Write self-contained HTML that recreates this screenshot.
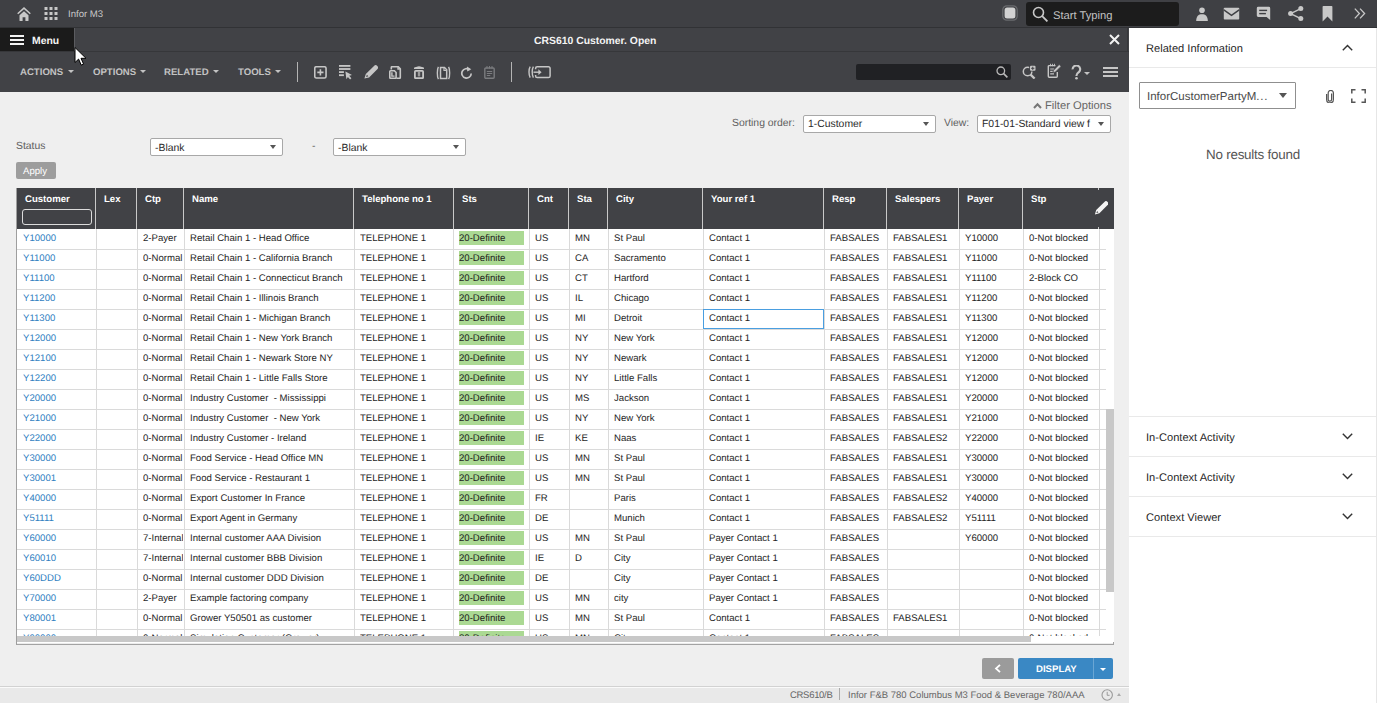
<!DOCTYPE html><html><head><meta charset="utf-8"><title>CRS610</title><style>
*{box-sizing:border-box}
html,body{margin:0;padding:0}
body{width:1377px;height:703px;overflow:hidden;position:relative;background:#efefef;font-family:"Liberation Sans",sans-serif;text-rendering:geometricPrecision}
.a{position:absolute}
svg{position:absolute;display:block}
#topbar{position:absolute;left:0;top:0;width:1377px;height:28px;background:#3f4044;border-bottom:1px solid #313235}
#menubar{position:absolute;left:0;top:28px;width:1129px;height:24px;background:#414246;border-bottom:1px solid #36373a}
#menubtn{position:absolute;left:0;top:0;width:75px;height:23px;background:#1b1b1b;border-right:1px solid #5b5c60}
#toolbar{position:absolute;left:0;top:52px;width:1129px;height:40px;background:#414246}
.tm{position:absolute;top:66px;font-size:9.6px;font-weight:bold;color:#c3c3c3;line-height:14px;white-space:nowrap}
.caret{position:absolute;width:0;height:0;border-left:3px solid transparent;border-right:3px solid transparent;border-top:3px solid #c3c3c3}
.sep{position:absolute;width:1px;background:#b4b4b4}
#panel{position:absolute;left:1129px;top:28px;width:247px;height:675px;background:#fff}
.pl{position:absolute;left:0;width:247px;height:1px;background:#e9e9e9}
.ptxt{position:absolute;left:17px;font-size:11.1px;color:#1f1f1f;white-space:nowrap;line-height:14px}
.dd{position:absolute;background:#fff;border:1px solid #a8a8a8;border-radius:2px}
.ddt{position:absolute;font-size:10.4px;color:#2a2a2a;white-space:nowrap;line-height:14px}
.ddc{position:absolute;width:0;height:0;border-left:3.5px solid transparent;border-right:3.5px solid transparent;border-top:4px solid #555}
.lbl{position:absolute;font-size:10.4px;color:#5e5e5e;white-space:nowrap;line-height:14px}
#tbl{position:absolute;left:16px;top:188px;width:1098px;height:457px;background:#fff;border-left:1px solid #9e9e9e;border-bottom:1px solid #a3a3a3}
.thead{position:absolute;left:0;top:0;width:1097px;height:41px;background:#414246}
.th{position:absolute;top:5px;font-size:9.6px;font-weight:bold;color:#fff;line-height:14px;white-space:nowrap}
.hd{position:absolute;top:0;width:1px;height:41px;background:#c9c9c9}
.hfilter{position:absolute;left:5px;top:21px;width:70px;height:16px;border:1.3px solid #dcdcdc;border-radius:3px}
.hpen{left:1077px;top:13px}
.tbody{position:absolute;left:0;top:41px;width:1089px;height:407px;overflow:hidden}
.tr{position:absolute;left:0;width:1089px;height:20px}
.td{position:absolute;top:3px;font-size:9.6px;color:#1e1e1e;line-height:14px;white-space:nowrap;overflow:hidden}
.lnk{color:#2f80bf}
.sts{background:#abd993;width:65px;height:14px;top:2px;line-height:16px}
.hl{position:absolute;left:0;width:1089px;height:1px;background:#dadada}
.vl{position:absolute;top:0;width:1px;height:407px;background:#dadada}
.sel{position:absolute;left:686px;top:80px;width:121px;height:20px;border:1px solid #4a9ee0}
.vthumb{position:absolute;left:1089px;top:221px;width:8px;height:183px;background:#c8c8c8}
.hthumb{position:absolute;left:0;top:448px;width:1014px;height:6px;background:#c8c8c8}

</style></head><body>
<div id="topbar">
 <svg style="left:17px;top:7px" width="14" height="14" viewBox="0 0 14 14"><path d="M0.7 6.8L7 1.1l6.3 5.7" fill="none" stroke="#c8c8c8" stroke-width="1.5"/><path d="M2.5 8.2L7 4.2l4.5 4V13.4a0.6 0.6 0 0 1-0.6 0.6H8.4V10.2H5.6V14H3.1a0.6 0.6 0 0 1-0.6-0.6z" fill="#c8c8c8"/></svg>
 <svg style="left:44px;top:7px" width="14" height="14" viewBox="0 0 14 14" fill="#c8c8c8"><rect x="0.5" y="0" width="3" height="3"/><rect x="5.5" y="0" width="3" height="3"/><rect x="10.5" y="0" width="3" height="3"/><rect x="0.5" y="5" width="3" height="3"/><rect x="5.5" y="5" width="3" height="3"/><rect x="10.5" y="5" width="3" height="3"/><rect x="0.5" y="10" width="3" height="3"/><rect x="5.5" y="10" width="3" height="3"/><rect x="10.5" y="10" width="3" height="3"/></svg>
 <span class="a" style="left:68px;top:8px;font-size:9.6px;color:#c9c9c9;line-height:14px">Infor M3</span>
 <svg style="left:1002px;top:5px" width="16" height="16" viewBox="0 0 16 16"><rect x="0.8" y="0.8" width="14.4" height="14.4" rx="4" fill="none" stroke="#6a6b6e" stroke-width="1.2"/><rect x="2.6" y="2.6" width="10.8" height="10.8" rx="2.5" fill="#d2d2d2"/></svg>
 <div class="a" style="left:1026px;top:2px;width:153px;height:24px;background:#1c1c1c;border-radius:3px"></div>
 <svg style="left:1032px;top:6px" width="17" height="16" viewBox="0 0 17 16"><circle cx="6.5" cy="6.5" r="5" fill="none" stroke="#c8c8c8" stroke-width="1.6"/><path d="M10.2 10.2l5.2 5.2" stroke="#c8c8c8" stroke-width="1.8"/></svg>
 <span class="a" style="left:1053px;top:9px;font-size:11.2px;color:#c2c2c2;line-height:14px">Start Typing</span>
 <svg style="left:1196px;top:7px" width="12" height="14" viewBox="0 0 12 14" fill="#c8c8c8"><circle cx="6" cy="3.2" r="2.8"/><path d="M0.2 14C0.2 9 2.6 7.2 6 7.2S11.8 9 11.8 14z"/></svg>
 <svg style="left:1223px;top:7px" width="17" height="13" viewBox="0 0 17 13"><rect x="0.8" y="0.7" width="15.4" height="11.8" rx="0.8" fill="#c8c8c8"/><path d="M0.8 2.8L8.5 8.4l7.7-5.6" fill="none" stroke="#3f4044" stroke-width="1.5"/></svg>
 <svg style="left:1256px;top:6px" width="15" height="15" viewBox="0 0 15 15"><path d="M2.2 0.8h10.6a1.4 1.4 0 0 1 1.4 1.4V14L10.6 11H2.2A1.4 1.4 0 0 1 0.8 9.6V2.2A1.4 1.4 0 0 1 2.2 0.8z" fill="#c8c8c8"/><rect x="3.2" y="3.7" width="7.9" height="1.4" fill="#3f4044"/><rect x="3.2" y="6.9" width="6.7" height="1.4" fill="#3f4044"/></svg>
 <svg style="left:1288px;top:6px" width="16" height="16" viewBox="0 0 16 16" fill="#c8c8c8"><circle cx="2.6" cy="7.6" r="2.5"/><circle cx="12.8" cy="2.6" r="2.5"/><circle cx="12.8" cy="12.6" r="2.5"/><path d="M2.6 7.6L12.8 2.6M2.6 7.6l10.2 5" stroke="#c8c8c8" stroke-width="1.5"/></svg>
 <svg style="left:1322px;top:6px" width="11" height="16" viewBox="0 0 11 16"><path d="M0.6 0.8a0.8 0.8 0 0 1 0.8-0.8h8.2a0.8 0.8 0 0 1 0.8 0.8V15.4L5.5 10.6 0.6 15.4z" fill="#c8c8c8"/></svg>
 <svg style="left:1354px;top:8px" width="12" height="11" viewBox="0 0 12 11"><path d="M0.8 0.6L5.4 5.5 0.8 10.4M6 0.6l4.6 4.9L6 10.4" fill="none" stroke="#c8c8c8" stroke-width="1.3"/></svg>
</div>
<div id="menubar">
 <div id="menubtn">
  <div class="a" style="left:10px;top:7px;width:14px;height:2px;background:#f2f2f2"></div>
  <div class="a" style="left:10px;top:11px;width:14px;height:2px;background:#f2f2f2"></div>
  <div class="a" style="left:10px;top:15px;width:14px;height:2px;background:#f2f2f2"></div>
  <span class="a" style="left:32px;top:7px;font-size:10.4px;font-weight:bold;color:#f4f4f4;line-height:14px">Menu</span>
 </div>
 <span class="a" style="left:534px;top:7px;font-size:10.4px;font-weight:bold;color:#f4f4f4;line-height:14px">CRS610 Customer. Open</span>
 <svg style="left:1109px;top:6px" width="11" height="11" viewBox="0 0 11 11"><path d="M1 1l9 9M10 1l-9 9" stroke="#f2f2f2" stroke-width="2"/></svg>
</div>
<div id="toolbar"></div><i class="a" style="left:1127px;top:28px;width:1px;height:23px;background:#36373a"></i>
<span class="tm" style="left:20px">ACTIONS</span><i class="caret" style="left:68px;top:70px"></i>
<span class="tm" style="left:93px">OPTIONS</span><i class="caret" style="left:140px;top:70px"></i>
<span class="tm" style="left:164px">RELATED</span><i class="caret" style="left:213px;top:70px"></i>
<span class="tm" style="left:238px">TOOLS</span><i class="caret" style="left:275px;top:70px"></i>
<i class="sep" style="left:297px;top:62px;height:20px"></i>
<i class="sep" style="left:511px;top:62px;height:20px"></i>
<!-- toolbar icons -->
<svg style="left:314px;top:66px" width="14" height="14" viewBox="0 0 14 14"><rect x="0.75" y="0.75" width="11.3" height="11.3" rx="1.6" fill="none" stroke="#c6c6c6" stroke-width="1.6"/><path d="M6.4 3.3v6.2M3.3 6.4h6.2" stroke="#c6c6c6" stroke-width="1.6"/></svg>
<svg style="left:338px;top:64px" width="15" height="16" viewBox="0 0 15 16" fill="#c6c6c6"><rect x="1" y="1" width="11.4" height="1.8"/><rect x="1" y="4.1" width="11.4" height="1.8"/><rect x="1" y="7.2" width="4.9" height="1.8"/><rect x="1" y="10.3" width="4.9" height="1.8"/><path d="M7.4 7.6l6.6 3.4-2.8 0.8 2.2 2.5-1.3 1.2-2.2-2.5-1.5 2.2z"/></svg>
<svg style="left:364px;top:65px" width="14" height="14" viewBox="0 0 14 14"><path d="M0.4 13.6L1.8 9.1L10 0.9A2.3 2.3 0 0 1 13.3 4.2L5.1 12.4Z" fill="#c6c6c6"/><path d="M2.1 11.9L2.9 9.8L4.3 11.2Z" fill="#414246"/></svg>
<svg style="left:389px;top:66px" width="13" height="13" viewBox="0 0 13 13"><path d="M2.3 3.5V1.5a0.8 0.8 0 0 1 0.8-0.8H9.2L11.3 2.9V11.5a0.8 0.8 0 0 1-0.8 0.8H7.4" fill="none" stroke="#c6c6c6" stroke-width="1.6"/><path d="M1.6 4.8H5.4L7.1 6.5V11.5a0.8 0.8 0 0 1-0.8 0.8H1.6a0.8 0.8 0 0 1-0.8-0.8V5.6a0.8 0.8 0 0 1 0.8-0.8z" fill="none" stroke="#c6c6c6" stroke-width="1.6"/><path d="M2.9 6.3v3.8h2.6" fill="none" stroke="#c6c6c6" stroke-width="1.4"/><path d="M8.3 0.8l3 3h-3z" fill="#c6c6c6"/></svg>
<svg style="left:413px;top:66px" width="12" height="13" viewBox="0 0 12 13"><path d="M1 3V2.2Q1 1.4 2 1.2L4 0.8Q4.4 0.2 6 0.2T8 0.8L10 1.2Q11 1.4 11 2.2V3z" fill="#c6c6c6"/><rect x="1.9" y="4.9" width="8.2" height="7.3" rx="0.8" fill="none" stroke="#c6c6c6" stroke-width="1.8"/><rect x="4.8" y="5.8" width="2.4" height="4.6" fill="#9a9a9a"/></svg>
<svg style="left:436px;top:66px" width="15" height="14" viewBox="0 0 15 14"><path d="M2.4 0.8C1 3 1 11 2.4 13.2M12.6 0.8C14 3 14 11 12.6 13.2" fill="none" stroke="#c6c6c6" stroke-width="1.4"/><path d="M4.5 1.5h4l2.2 2.2v8.8H4.5z" fill="none" stroke="#c6c6c6" stroke-width="1.5"/><path d="M8 1.5v3h2.7" fill="none" stroke="#c6c6c6" stroke-width="1.2"/></svg>
<svg style="left:460px;top:66px" width="13" height="13" viewBox="0 0 13 13"><path d="M9.6 3.8A4.7 4.7 0 1 0 11.2 7.4" fill="none" stroke="#c6c6c6" stroke-width="1.7"/><path d="M7 0.4l4.3 2.8-4.1 2.3z" fill="#c6c6c6"/></svg>
<svg style="left:484px;top:66px" width="11" height="13" viewBox="0 0 11 13"><rect x="0.8" y="2" width="9.4" height="10.2" rx="1" fill="none" stroke="#7b7c7f" stroke-width="1.4"/><path d="M3 0v2.6M5.5 0v2.6M8 0v2.6" stroke="#7b7c7f" stroke-width="1"/><path d="M2.8 5.5h5.4M2.8 7.5h5.4M2.8 9.5h3.5" stroke="#7b7c7f" stroke-width="1"/></svg>
<svg style="left:528px;top:66px" width="23" height="13" viewBox="0 0 23 13"><path d="M2.2 0.6C0.6 3 0.6 9 2.2 11.6M5.4 0.6C3.8 3 3.8 9 5.4 11.6" fill="none" stroke="#c6c6c6" stroke-width="1.4"/><path d="M7.6 3.2V2.4a1.6 1.6 0 0 1 1.6-1.6h11.3a1.6 1.6 0 0 1 1.6 1.6v7.6a1.6 1.6 0 0 1-1.6 1.6H9.2a1.6 1.6 0 0 1-1.6-1.6V9" fill="none" stroke="#c6c6c6" stroke-width="1.5"/><path d="M5.5 6.2h5.8" stroke="#c6c6c6" stroke-width="1.4"/><path d="M10.4 3.3l3.2 2.9-3.2 2.9z" fill="#c6c6c6"/></svg>
<!-- right toolbar -->
<div class="a" style="left:856px;top:64px;width:155px;height:16px;background:#202124;border-radius:2px"></div>
<svg style="left:996px;top:66px" width="12" height="12" viewBox="0 0 12 12"><circle cx="4.8" cy="4.8" r="3.8" fill="none" stroke="#b9b9b9" stroke-width="1.3"/><path d="M7.6 7.6l3.8 3.8" stroke="#b9b9b9" stroke-width="1.6"/></svg>
<svg style="left:1022px;top:65px" width="15" height="14" viewBox="0 0 15 14"><circle cx="5.6" cy="6.5" r="4.3" fill="none" stroke="#c6c6c6" stroke-width="1.5"/><path d="M8.6 9.6l4 4" stroke="#c6c6c6" stroke-width="2.2"/><rect x="7.2" y="0" width="7" height="6.5" rx="1.2" fill="#414246"/><rect x="8" y="0.8" width="5.5" height="5" rx="1" fill="#c6c6c6"/><path d="M10.75 1.7v3.2M9.15 3.3h3.2" stroke="#414246" stroke-width="1"/></svg>
<svg style="left:1047px;top:63px" width="15" height="15" viewBox="0 0 15 15"><path d="M8.5 2.6H2.2a0.9 0.9 0 0 0-0.9 0.9v9.8a0.9 0.9 0 0 0 0.9 0.9h7.2a0.9 0.9 0 0 0 0.9-0.9V9" fill="none" stroke="#c6c6c6" stroke-width="1.4"/><path d="M3.5 0.8v2.4M5.5 0.8v2.4M7.5 0.8v2.4" stroke="#c6c6c6" stroke-width="0.9"/><path d="M3.2 6h4M3.2 8.4h2.6M3.2 10.8h3.8" stroke="#c6c6c6" stroke-width="1.2"/><path d="M12.2 1.6l1.8 1.8-5.6 5.6-2.5 0.7 0.7-2.5z" fill="#c6c6c6" stroke="#414246" stroke-width="0.6"/></svg>
<svg style="left:1071px;top:65px" width="11" height="15" viewBox="0 0 11 15"><path d="M1.6 4.4A3.8 3.8 0 1 1 7.9 7.1C6.4 8.2 5.5 8.8 5.5 10.6V11" fill="none" stroke="#c6c6c6" stroke-width="2.1"/><circle cx="5.5" cy="13.3" r="1.3" fill="#c6c6c6"/></svg>
<i class="caret" style="left:1084px;top:72px;border-left-width:3.5px;border-right-width:3.5px;border-top-width:3px"></i>
<div class="a" style="left:1103px;top:67px;width:15px;height:2px;background:#c6c6c6"></div>
<div class="a" style="left:1103px;top:71px;width:15px;height:2px;background:#c6c6c6"></div>
<div class="a" style="left:1103px;top:75px;width:15px;height:2px;background:#c6c6c6"></div>
<!-- content -->
<svg style="left:1033px;top:102px" width="9" height="7" viewBox="0 0 9 7"><path d="M1 6L4.5 2.2 8 6" fill="none" stroke="#777" stroke-width="2"/></svg>
<span class="a" style="left:1045px;top:99px;font-size:11.2px;color:#666;line-height:14px">Filter Options</span>
<span class="lbl" style="left:732px;top:117px">Sorting order:</span>
<div class="dd" style="left:803px;top:115px;width:133px;height:18px"></div>
<span class="ddt" style="left:808px;top:118px">1-Customer</span><i class="ddc" style="left:923px;top:122px"></i>
<span class="lbl" style="left:944px;top:117px">View:</span>
<div class="dd" style="left:977px;top:115px;width:134px;height:18px"></div>
<span class="ddt" style="left:982px;top:118px">F01-01-Standard view f</span><i class="ddc" style="left:1098px;top:122px"></i>
<span class="lbl" style="left:16px;top:140px;font-size:10.4px">Status</span>
<div class="dd" style="left:150px;top:138px;width:133px;height:18px"></div>
<span class="ddt" style="left:155px;top:142px;font-size:10.4px">-Blank</span><i class="ddc" style="left:270px;top:145px"></i>
<span class="lbl" style="left:312px;top:140px">-</span>
<div class="dd" style="left:333px;top:138px;width:133px;height:18px"></div>
<span class="ddt" style="left:338px;top:142px;font-size:10.4px">-Blank</span><i class="ddc" style="left:453px;top:145px"></i>
<div class="a" style="left:16px;top:162px;width:40px;height:17px;background:#9d9d9d;border-radius:2px"></div>
<span class="a" style="left:23px;top:165px;font-size:9.6px;color:#fff;line-height:14px">Apply</span>
<!-- bottom buttons -->
<div class="a" style="left:982px;top:658px;width:32px;height:21px;background:#9b9b9b;border-radius:2px"></div>
<svg style="left:994px;top:664px" width="8" height="9" viewBox="0 0 8 9"><path d="M6 0.8L2 4.5 6 8.2" fill="none" stroke="#fff" stroke-width="1.8"/></svg>
<div class="a" style="left:1018px;top:658px;width:95px;height:21px;background:#3a88c4;border-radius:2px"></div>
<div class="a" style="left:1093px;top:658px;width:1px;height:21px;background:#6aa6d4"></div>
<span class="a" style="left:1036px;top:663px;font-size:9.6px;font-weight:bold;color:#fff;line-height:14px">DISPLAY</span>
<i class="caret" style="left:1100px;top:668px;border-top-color:#fff"></i>
<!-- status bar -->
<div class="a" style="left:0;top:686px;width:1129px;height:17px;background:#e9e9e9;border-top:1px solid #d2d2d2;box-shadow:inset 0 1px 0 #fafafa"></div>
<span class="a" style="left:790px;top:690px;font-size:9.5px;letter-spacing:-0.3px;color:#666;line-height:12px">CRS610/B</span>
<i class="a" style="left:839px;top:688px;width:1px;height:12px;background:#aaa"></i>
<span class="a" style="left:848px;top:690px;font-size:9.5px;color:#666;line-height:12px">Infor F&amp;B 780 Columbus M3 Food &amp; Beverage 780/AAA</span>
<svg style="left:1101px;top:689px" width="13" height="12" viewBox="0 0 13 12"><circle cx="6.2" cy="6" r="5.2" fill="none" stroke="#9a9a9a" stroke-width="1.1"/><path d="M6.2 2.8V6.3h2.4" fill="none" stroke="#9a9a9a" stroke-width="1"/></svg>
<i class="caret" style="left:1117px;top:693px;border-top:0;border-bottom:3px solid #aaa;border-left-width:2px;border-right-width:2px"></i>
<!-- right panel -->
<div id="panel">
 <span class="ptxt" style="top:14px">Related Information</span>
 <svg style="left:213px;top:16px" width="11" height="7" viewBox="0 0 11 7"><path d="M0.8 6.2L5.5 1.4l4.7 4.8" fill="none" stroke="#333" stroke-width="1.4"/></svg>
 <i class="pl" style="top:39px"></i>
 <div class="dd" style="left:10px;top:54px;width:157px;height:27px;border-color:#8f8f8f;border-radius:1px"></div>
 <span class="ddt" style="left:18px;top:62px;font-size:11.5px;color:#4a4a4a">InforCustomerPartyM<span style="letter-spacing:0.8px">...</span></span>
 <i class="ddc" style="left:150px;top:65px;border-left-width:4.5px;border-right-width:4.5px;border-top-width:5px"></i>
 <svg style="left:197px;top:62px" width="9" height="13" viewBox="0 0 9 13"><path d="M5.6 3.5v6a1.7 1.7 0 0 1-3.4 0V3a2.6 2.6 0 0 1 5.2 0v6.5a3.4 3.4 0 0 1-6.8 0V4" fill="none" stroke="#555" stroke-width="1.2"/></svg>
 <svg style="left:222px;top:61px" width="15" height="14" viewBox="0 0 15 14"><path d="M0.8 4.5V0.8h3.7M10.5 0.8h3.7v3.7M14.2 9.5v3.7h-3.7M4.5 13.2H0.8V9.5" fill="none" stroke="#555" stroke-width="1.5"/></svg>
 <span class="a" style="left:77px;top:119px;font-size:13.4px;letter-spacing:-0.22px;color:#555;line-height:16px;white-space:nowrap">No results found</span>
 <i class="pl" style="top:388px"></i>
 <span class="ptxt" style="top:403px">In-Context Activity</span>
 <svg style="left:213px;top:405px" width="11" height="7" viewBox="0 0 11 7"><path d="M0.8 0.8L5.5 5.6l4.7-4.8" fill="none" stroke="#333" stroke-width="1.4"/></svg>
 <i class="pl" style="top:428px"></i>
 <span class="ptxt" style="top:443px">In-Context Activity</span>
 <svg style="left:213px;top:445px" width="11" height="7" viewBox="0 0 11 7"><path d="M0.8 0.8L5.5 5.6l4.7-4.8" fill="none" stroke="#333" stroke-width="1.4"/></svg>
 <i class="pl" style="top:468px"></i>
 <span class="ptxt" style="top:483px">Context Viewer</span>
 <svg style="left:213px;top:485px" width="11" height="7" viewBox="0 0 11 7"><path d="M0.8 0.8L5.5 5.6l4.7-4.8" fill="none" stroke="#333" stroke-width="1.4"/></svg>
 <i class="pl" style="top:508px"></i>
</div>
<div class="a" style="left:1376px;top:28px;width:1px;height:675px;background:#e6e6e6"></div>
<!-- cursor -->
<svg style="left:74px;top:46px" width="14" height="21" viewBox="0 0 14 20"><path d="M1 1v15l3.6-3.4 2.6 6 2.4-1-2.6-5.8h5z" fill="#fff" stroke="#000" stroke-width="1"/></svg>

<div id="tbl">
<div class="thead">
<span class="th" style="left:8px">Customer</span>
<span class="th" style="left:87px">Lex</span>
<span class="th" style="left:128px">Ctp</span>
<span class="th" style="left:175px">Name</span>
<span class="th" style="left:345px">Telephone no 1</span>
<span class="th" style="left:445px">Sts</span>
<span class="th" style="left:520px">Cnt</span>
<span class="th" style="left:560px">Sta</span>
<span class="th" style="left:599px">City</span>
<span class="th" style="left:694px">Your ref 1</span>
<span class="th" style="left:815px">Resp</span>
<span class="th" style="left:878px">Salespers</span>
<span class="th" style="left:950px">Payer</span>
<span class="th" style="left:1014px">Stp</span>
<i class="hd" style="left:78px"></i>
<i class="hd" style="left:119px"></i>
<i class="hd" style="left:166px"></i>
<i class="hd" style="left:336px"></i>
<i class="hd" style="left:436px"></i>
<i class="hd" style="left:511px"></i>
<i class="hd" style="left:551px"></i>
<i class="hd" style="left:590px"></i>
<i class="hd" style="left:685px"></i>
<i class="hd" style="left:806px"></i>
<i class="hd" style="left:869px"></i>
<i class="hd" style="left:941px"></i>
<i class="hd" style="left:1005px"></i>
<i class="hd" style="left:1081px;height:2px"></i><i class="hd" style="left:1081px;top:39px;height:2px"></i>
<div class="hfilter"></div>
<svg class="hpen" width="14" height="14" viewBox="0 0 14 14"><path d="M0.9 13.6L2.2 9.1L10.4 0.9A2.2 2.2 0 0 1 13.6 4.1L5.4 12.3Z" fill="#f4f4f4"/><path d="M2.4 12.1L3.1 10.1L4.4 11.4Z" fill="#414246"/></svg>
</div>
<div class="tbody">
<div class="tr" style="top:0px">
<span class="td lnk" style="left:6px;width:72px">Y10000</span>
<span class="td" style="left:126px;width:40px">2-Payer</span>
<span class="td" style="left:173px;width:163px">Retail Chain 1 - Head Office</span>
<span class="td" style="left:343px;width:92px">TELEPHONE 1</span>
<span class="td sts" style="left:442px">20-Definite</span>
<span class="td" style="left:518px;width:33px">US</span>
<span class="td" style="left:558px;width:32px">MN</span>
<span class="td" style="left:597px;width:88px">St Paul</span>
<span class="td" style="left:692px;width:114px">Contact 1</span>
<span class="td" style="left:813px;width:56px">FABSALES</span>
<span class="td" style="left:876px;width:65px">FABSALES1</span>
<span class="td" style="left:948px;width:57px">Y10000</span>
<span class="td" style="left:1012px;width:69px">0-Not blocked</span>
</div>
<div class="tr" style="top:20px">
<span class="td lnk" style="left:6px;width:72px">Y11000</span>
<span class="td" style="left:126px;width:40px">0-Normal</span>
<span class="td" style="left:173px;width:163px">Retail Chain 1 - California Branch</span>
<span class="td" style="left:343px;width:92px">TELEPHONE 1</span>
<span class="td sts" style="left:442px">20-Definite</span>
<span class="td" style="left:518px;width:33px">US</span>
<span class="td" style="left:558px;width:32px">CA</span>
<span class="td" style="left:597px;width:88px">Sacramento</span>
<span class="td" style="left:692px;width:114px">Contact 1</span>
<span class="td" style="left:813px;width:56px">FABSALES</span>
<span class="td" style="left:876px;width:65px">FABSALES1</span>
<span class="td" style="left:948px;width:57px">Y11000</span>
<span class="td" style="left:1012px;width:69px">0-Not blocked</span>
</div>
<div class="tr" style="top:40px">
<span class="td lnk" style="left:6px;width:72px">Y11100</span>
<span class="td" style="left:126px;width:40px">0-Normal</span>
<span class="td" style="left:173px;width:163px">Retail Chain 1 - Connecticut Branch</span>
<span class="td" style="left:343px;width:92px">TELEPHONE 1</span>
<span class="td sts" style="left:442px">20-Definite</span>
<span class="td" style="left:518px;width:33px">US</span>
<span class="td" style="left:558px;width:32px">CT</span>
<span class="td" style="left:597px;width:88px">Hartford</span>
<span class="td" style="left:692px;width:114px">Contact 1</span>
<span class="td" style="left:813px;width:56px">FABSALES</span>
<span class="td" style="left:876px;width:65px">FABSALES1</span>
<span class="td" style="left:948px;width:57px">Y11100</span>
<span class="td" style="left:1012px;width:69px">2-Block CO</span>
</div>
<div class="tr" style="top:60px">
<span class="td lnk" style="left:6px;width:72px">Y11200</span>
<span class="td" style="left:126px;width:40px">0-Normal</span>
<span class="td" style="left:173px;width:163px">Retail Chain 1 - Illinois Branch</span>
<span class="td" style="left:343px;width:92px">TELEPHONE 1</span>
<span class="td sts" style="left:442px">20-Definite</span>
<span class="td" style="left:518px;width:33px">US</span>
<span class="td" style="left:558px;width:32px">IL</span>
<span class="td" style="left:597px;width:88px">Chicago</span>
<span class="td" style="left:692px;width:114px">Contact 1</span>
<span class="td" style="left:813px;width:56px">FABSALES</span>
<span class="td" style="left:876px;width:65px">FABSALES1</span>
<span class="td" style="left:948px;width:57px">Y11200</span>
<span class="td" style="left:1012px;width:69px">0-Not blocked</span>
</div>
<div class="tr" style="top:80px">
<span class="td lnk" style="left:6px;width:72px">Y11300</span>
<span class="td" style="left:126px;width:40px">0-Normal</span>
<span class="td" style="left:173px;width:163px">Retail Chain 1 - Michigan Branch</span>
<span class="td" style="left:343px;width:92px">TELEPHONE 1</span>
<span class="td sts" style="left:442px">20-Definite</span>
<span class="td" style="left:518px;width:33px">US</span>
<span class="td" style="left:558px;width:32px">MI</span>
<span class="td" style="left:597px;width:88px">Detroit</span>
<span class="td" style="left:692px;width:114px">Contact 1</span>
<span class="td" style="left:813px;width:56px">FABSALES</span>
<span class="td" style="left:876px;width:65px">FABSALES1</span>
<span class="td" style="left:948px;width:57px">Y11300</span>
<span class="td" style="left:1012px;width:69px">0-Not blocked</span>
</div>
<div class="tr" style="top:100px">
<span class="td lnk" style="left:6px;width:72px">Y12000</span>
<span class="td" style="left:126px;width:40px">0-Normal</span>
<span class="td" style="left:173px;width:163px">Retail Chain 1 - New York Branch</span>
<span class="td" style="left:343px;width:92px">TELEPHONE 1</span>
<span class="td sts" style="left:442px">20-Definite</span>
<span class="td" style="left:518px;width:33px">US</span>
<span class="td" style="left:558px;width:32px">NY</span>
<span class="td" style="left:597px;width:88px">New York</span>
<span class="td" style="left:692px;width:114px">Contact 1</span>
<span class="td" style="left:813px;width:56px">FABSALES</span>
<span class="td" style="left:876px;width:65px">FABSALES1</span>
<span class="td" style="left:948px;width:57px">Y12000</span>
<span class="td" style="left:1012px;width:69px">0-Not blocked</span>
</div>
<div class="tr" style="top:120px">
<span class="td lnk" style="left:6px;width:72px">Y12100</span>
<span class="td" style="left:126px;width:40px">0-Normal</span>
<span class="td" style="left:173px;width:163px">Retail Chain 1 - Newark Store NY</span>
<span class="td" style="left:343px;width:92px">TELEPHONE 1</span>
<span class="td sts" style="left:442px">20-Definite</span>
<span class="td" style="left:518px;width:33px">US</span>
<span class="td" style="left:558px;width:32px">NY</span>
<span class="td" style="left:597px;width:88px">Newark</span>
<span class="td" style="left:692px;width:114px">Contact 1</span>
<span class="td" style="left:813px;width:56px">FABSALES</span>
<span class="td" style="left:876px;width:65px">FABSALES1</span>
<span class="td" style="left:948px;width:57px">Y12000</span>
<span class="td" style="left:1012px;width:69px">0-Not blocked</span>
</div>
<div class="tr" style="top:140px">
<span class="td lnk" style="left:6px;width:72px">Y12200</span>
<span class="td" style="left:126px;width:40px">0-Normal</span>
<span class="td" style="left:173px;width:163px">Retail Chain 1 - Little Falls Store</span>
<span class="td" style="left:343px;width:92px">TELEPHONE 1</span>
<span class="td sts" style="left:442px">20-Definite</span>
<span class="td" style="left:518px;width:33px">US</span>
<span class="td" style="left:558px;width:32px">NY</span>
<span class="td" style="left:597px;width:88px">Little Falls</span>
<span class="td" style="left:692px;width:114px">Contact 1</span>
<span class="td" style="left:813px;width:56px">FABSALES</span>
<span class="td" style="left:876px;width:65px">FABSALES1</span>
<span class="td" style="left:948px;width:57px">Y12000</span>
<span class="td" style="left:1012px;width:69px">0-Not blocked</span>
</div>
<div class="tr" style="top:160px">
<span class="td lnk" style="left:6px;width:72px">Y20000</span>
<span class="td" style="left:126px;width:40px">0-Normal</span>
<span class="td" style="left:173px;width:163px">Industry Customer&nbsp; - Mississippi</span>
<span class="td" style="left:343px;width:92px">TELEPHONE 1</span>
<span class="td sts" style="left:442px">20-Definite</span>
<span class="td" style="left:518px;width:33px">US</span>
<span class="td" style="left:558px;width:32px">MS</span>
<span class="td" style="left:597px;width:88px">Jackson</span>
<span class="td" style="left:692px;width:114px">Contact 1</span>
<span class="td" style="left:813px;width:56px">FABSALES</span>
<span class="td" style="left:876px;width:65px">FABSALES1</span>
<span class="td" style="left:948px;width:57px">Y20000</span>
<span class="td" style="left:1012px;width:69px">0-Not blocked</span>
</div>
<div class="tr" style="top:180px">
<span class="td lnk" style="left:6px;width:72px">Y21000</span>
<span class="td" style="left:126px;width:40px">0-Normal</span>
<span class="td" style="left:173px;width:163px">Industry Customer&nbsp; - New York</span>
<span class="td" style="left:343px;width:92px">TELEPHONE 1</span>
<span class="td sts" style="left:442px">20-Definite</span>
<span class="td" style="left:518px;width:33px">US</span>
<span class="td" style="left:558px;width:32px">NY</span>
<span class="td" style="left:597px;width:88px">New York</span>
<span class="td" style="left:692px;width:114px">Contact 1</span>
<span class="td" style="left:813px;width:56px">FABSALES</span>
<span class="td" style="left:876px;width:65px">FABSALES1</span>
<span class="td" style="left:948px;width:57px">Y21000</span>
<span class="td" style="left:1012px;width:69px">0-Not blocked</span>
</div>
<div class="tr" style="top:200px">
<span class="td lnk" style="left:6px;width:72px">Y22000</span>
<span class="td" style="left:126px;width:40px">0-Normal</span>
<span class="td" style="left:173px;width:163px">Industry Customer - Ireland</span>
<span class="td" style="left:343px;width:92px">TELEPHONE 1</span>
<span class="td sts" style="left:442px">20-Definite</span>
<span class="td" style="left:518px;width:33px">IE</span>
<span class="td" style="left:558px;width:32px">KE</span>
<span class="td" style="left:597px;width:88px">Naas</span>
<span class="td" style="left:692px;width:114px">Contact 1</span>
<span class="td" style="left:813px;width:56px">FABSALES</span>
<span class="td" style="left:876px;width:65px">FABSALES2</span>
<span class="td" style="left:948px;width:57px">Y22000</span>
<span class="td" style="left:1012px;width:69px">0-Not blocked</span>
</div>
<div class="tr" style="top:220px">
<span class="td lnk" style="left:6px;width:72px">Y30000</span>
<span class="td" style="left:126px;width:40px">0-Normal</span>
<span class="td" style="left:173px;width:163px">Food Service - Head Office MN</span>
<span class="td" style="left:343px;width:92px">TELEPHONE 1</span>
<span class="td sts" style="left:442px">20-Definite</span>
<span class="td" style="left:518px;width:33px">US</span>
<span class="td" style="left:558px;width:32px">MN</span>
<span class="td" style="left:597px;width:88px">St Paul</span>
<span class="td" style="left:692px;width:114px">Contact 1</span>
<span class="td" style="left:813px;width:56px">FABSALES</span>
<span class="td" style="left:876px;width:65px">FABSALES1</span>
<span class="td" style="left:948px;width:57px">Y30000</span>
<span class="td" style="left:1012px;width:69px">0-Not blocked</span>
</div>
<div class="tr" style="top:240px">
<span class="td lnk" style="left:6px;width:72px">Y30001</span>
<span class="td" style="left:126px;width:40px">0-Normal</span>
<span class="td" style="left:173px;width:163px">Food Service - Restaurant 1</span>
<span class="td" style="left:343px;width:92px">TELEPHONE 1</span>
<span class="td sts" style="left:442px">20-Definite</span>
<span class="td" style="left:518px;width:33px">US</span>
<span class="td" style="left:558px;width:32px">MN</span>
<span class="td" style="left:597px;width:88px">St Paul</span>
<span class="td" style="left:692px;width:114px">Contact 1</span>
<span class="td" style="left:813px;width:56px">FABSALES</span>
<span class="td" style="left:876px;width:65px">FABSALES1</span>
<span class="td" style="left:948px;width:57px">Y30000</span>
<span class="td" style="left:1012px;width:69px">0-Not blocked</span>
</div>
<div class="tr" style="top:260px">
<span class="td lnk" style="left:6px;width:72px">Y40000</span>
<span class="td" style="left:126px;width:40px">0-Normal</span>
<span class="td" style="left:173px;width:163px">Export Customer In France</span>
<span class="td" style="left:343px;width:92px">TELEPHONE 1</span>
<span class="td sts" style="left:442px">20-Definite</span>
<span class="td" style="left:518px;width:33px">FR</span>
<span class="td" style="left:597px;width:88px">Paris</span>
<span class="td" style="left:692px;width:114px">Contact 1</span>
<span class="td" style="left:813px;width:56px">FABSALES</span>
<span class="td" style="left:876px;width:65px">FABSALES2</span>
<span class="td" style="left:948px;width:57px">Y40000</span>
<span class="td" style="left:1012px;width:69px">0-Not blocked</span>
</div>
<div class="tr" style="top:280px">
<span class="td lnk" style="left:6px;width:72px">Y51111</span>
<span class="td" style="left:126px;width:40px">0-Normal</span>
<span class="td" style="left:173px;width:163px">Export Agent in Germany</span>
<span class="td" style="left:343px;width:92px">TELEPHONE 1</span>
<span class="td sts" style="left:442px">20-Definite</span>
<span class="td" style="left:518px;width:33px">DE</span>
<span class="td" style="left:597px;width:88px">Munich</span>
<span class="td" style="left:692px;width:114px">Contact 1</span>
<span class="td" style="left:813px;width:56px">FABSALES</span>
<span class="td" style="left:876px;width:65px">FABSALES2</span>
<span class="td" style="left:948px;width:57px">Y51111</span>
<span class="td" style="left:1012px;width:69px">0-Not blocked</span>
</div>
<div class="tr" style="top:300px">
<span class="td lnk" style="left:6px;width:72px">Y60000</span>
<span class="td" style="left:126px;width:40px">7-Internal</span>
<span class="td" style="left:173px;width:163px">Internal customer AAA Division</span>
<span class="td" style="left:343px;width:92px">TELEPHONE 1</span>
<span class="td sts" style="left:442px">20-Definite</span>
<span class="td" style="left:518px;width:33px">US</span>
<span class="td" style="left:558px;width:32px">MN</span>
<span class="td" style="left:597px;width:88px">St Paul</span>
<span class="td" style="left:692px;width:114px">Payer Contact 1</span>
<span class="td" style="left:813px;width:56px">FABSALES</span>
<span class="td" style="left:948px;width:57px">Y60000</span>
<span class="td" style="left:1012px;width:69px">0-Not blocked</span>
</div>
<div class="tr" style="top:320px">
<span class="td lnk" style="left:6px;width:72px">Y60010</span>
<span class="td" style="left:126px;width:40px">7-Internal</span>
<span class="td" style="left:173px;width:163px">Internal customer BBB Division</span>
<span class="td" style="left:343px;width:92px">TELEPHONE 1</span>
<span class="td sts" style="left:442px">20-Definite</span>
<span class="td" style="left:518px;width:33px">IE</span>
<span class="td" style="left:558px;width:32px">D</span>
<span class="td" style="left:597px;width:88px">City</span>
<span class="td" style="left:692px;width:114px">Payer Contact 1</span>
<span class="td" style="left:813px;width:56px">FABSALES</span>
<span class="td" style="left:1012px;width:69px">0-Not blocked</span>
</div>
<div class="tr" style="top:340px">
<span class="td lnk" style="left:6px;width:72px">Y60DDD</span>
<span class="td" style="left:126px;width:40px">0-Normal</span>
<span class="td" style="left:173px;width:163px">Internal customer DDD Division</span>
<span class="td" style="left:343px;width:92px">TELEPHONE 1</span>
<span class="td sts" style="left:442px">20-Definite</span>
<span class="td" style="left:518px;width:33px">DE</span>
<span class="td" style="left:597px;width:88px">City</span>
<span class="td" style="left:692px;width:114px">Payer Contact 1</span>
<span class="td" style="left:813px;width:56px">FABSALES</span>
<span class="td" style="left:1012px;width:69px">0-Not blocked</span>
</div>
<div class="tr" style="top:360px">
<span class="td lnk" style="left:6px;width:72px">Y70000</span>
<span class="td" style="left:126px;width:40px">2-Payer</span>
<span class="td" style="left:173px;width:163px">Example factoring company</span>
<span class="td" style="left:343px;width:92px">TELEPHONE 1</span>
<span class="td sts" style="left:442px">20-Definite</span>
<span class="td" style="left:518px;width:33px">US</span>
<span class="td" style="left:558px;width:32px">MN</span>
<span class="td" style="left:597px;width:88px">city</span>
<span class="td" style="left:692px;width:114px">Payer Contact 1</span>
<span class="td" style="left:813px;width:56px">FABSALES</span>
<span class="td" style="left:1012px;width:69px">0-Not blocked</span>
</div>
<div class="tr" style="top:380px">
<span class="td lnk" style="left:6px;width:72px">Y80001</span>
<span class="td" style="left:126px;width:40px">0-Normal</span>
<span class="td" style="left:173px;width:163px">Grower Y50501 as customer</span>
<span class="td" style="left:343px;width:92px">TELEPHONE 1</span>
<span class="td sts" style="left:442px">20-Definite</span>
<span class="td" style="left:518px;width:33px">US</span>
<span class="td" style="left:558px;width:32px">MN</span>
<span class="td" style="left:597px;width:88px">St Paul</span>
<span class="td" style="left:692px;width:114px">Contact 1</span>
<span class="td" style="left:813px;width:56px">FABSALES</span>
<span class="td" style="left:876px;width:65px">FABSALES1</span>
<span class="td" style="left:1012px;width:69px">0-Not blocked</span>
</div>
<div class="tr" style="top:400px">
<span class="td lnk" style="left:6px;width:72px">Y90000</span>
<span class="td" style="left:126px;width:40px">0-Normal</span>
<span class="td" style="left:173px;width:163px">Simulation Customer (Grower)</span>
<span class="td" style="left:343px;width:92px">TELEPHONE 1</span>
<span class="td sts" style="left:442px">20-Definite</span>
<span class="td" style="left:518px;width:33px">US</span>
<span class="td" style="left:558px;width:32px">MN</span>
<span class="td" style="left:597px;width:88px">City</span>
<span class="td" style="left:692px;width:114px">Contact 1</span>
<span class="td" style="left:813px;width:56px">FABSALES</span>
<span class="td" style="left:1012px;width:69px">0-Not blocked</span>
</div>
<i class="hl" style="top:20px"></i>
<i class="hl" style="top:40px"></i>
<i class="hl" style="top:60px"></i>
<i class="hl" style="top:80px"></i>
<i class="hl" style="top:100px"></i>
<i class="hl" style="top:120px"></i>
<i class="hl" style="top:140px"></i>
<i class="hl" style="top:160px"></i>
<i class="hl" style="top:180px"></i>
<i class="hl" style="top:200px"></i>
<i class="hl" style="top:220px"></i>
<i class="hl" style="top:240px"></i>
<i class="hl" style="top:260px"></i>
<i class="hl" style="top:280px"></i>
<i class="hl" style="top:300px"></i>
<i class="hl" style="top:320px"></i>
<i class="hl" style="top:340px"></i>
<i class="hl" style="top:360px"></i>
<i class="hl" style="top:380px"></i>
<i class="hl" style="top:400px"></i>
<i class="hl" style="top:420px"></i>
<i class="vl" style="left:79px"></i>
<i class="vl" style="left:120px"></i>
<i class="vl" style="left:167px"></i>
<i class="vl" style="left:337px"></i>
<i class="vl" style="left:436px"></i>
<i class="vl" style="left:512px"></i>
<i class="vl" style="left:552px"></i>
<i class="vl" style="left:591px"></i>
<i class="vl" style="left:686px"></i>
<i class="vl" style="left:807px"></i>
<i class="vl" style="left:870px"></i>
<i class="vl" style="left:942px"></i>
<i class="vl" style="left:1006px"></i>
<i class="vl" style="left:1082px"></i>
<div class="sel"></div>
</div>
<div class="vthumb"></div><div class="hthumb"></div><i class="a" style="left:0;top:455px;width:1096px;height:1px;background:#ececec"></i><i class="a" style="left:1096px;top:454px;width:1px;height:3px;background:#a3a3a3"></i>
</div>
</body></html>
